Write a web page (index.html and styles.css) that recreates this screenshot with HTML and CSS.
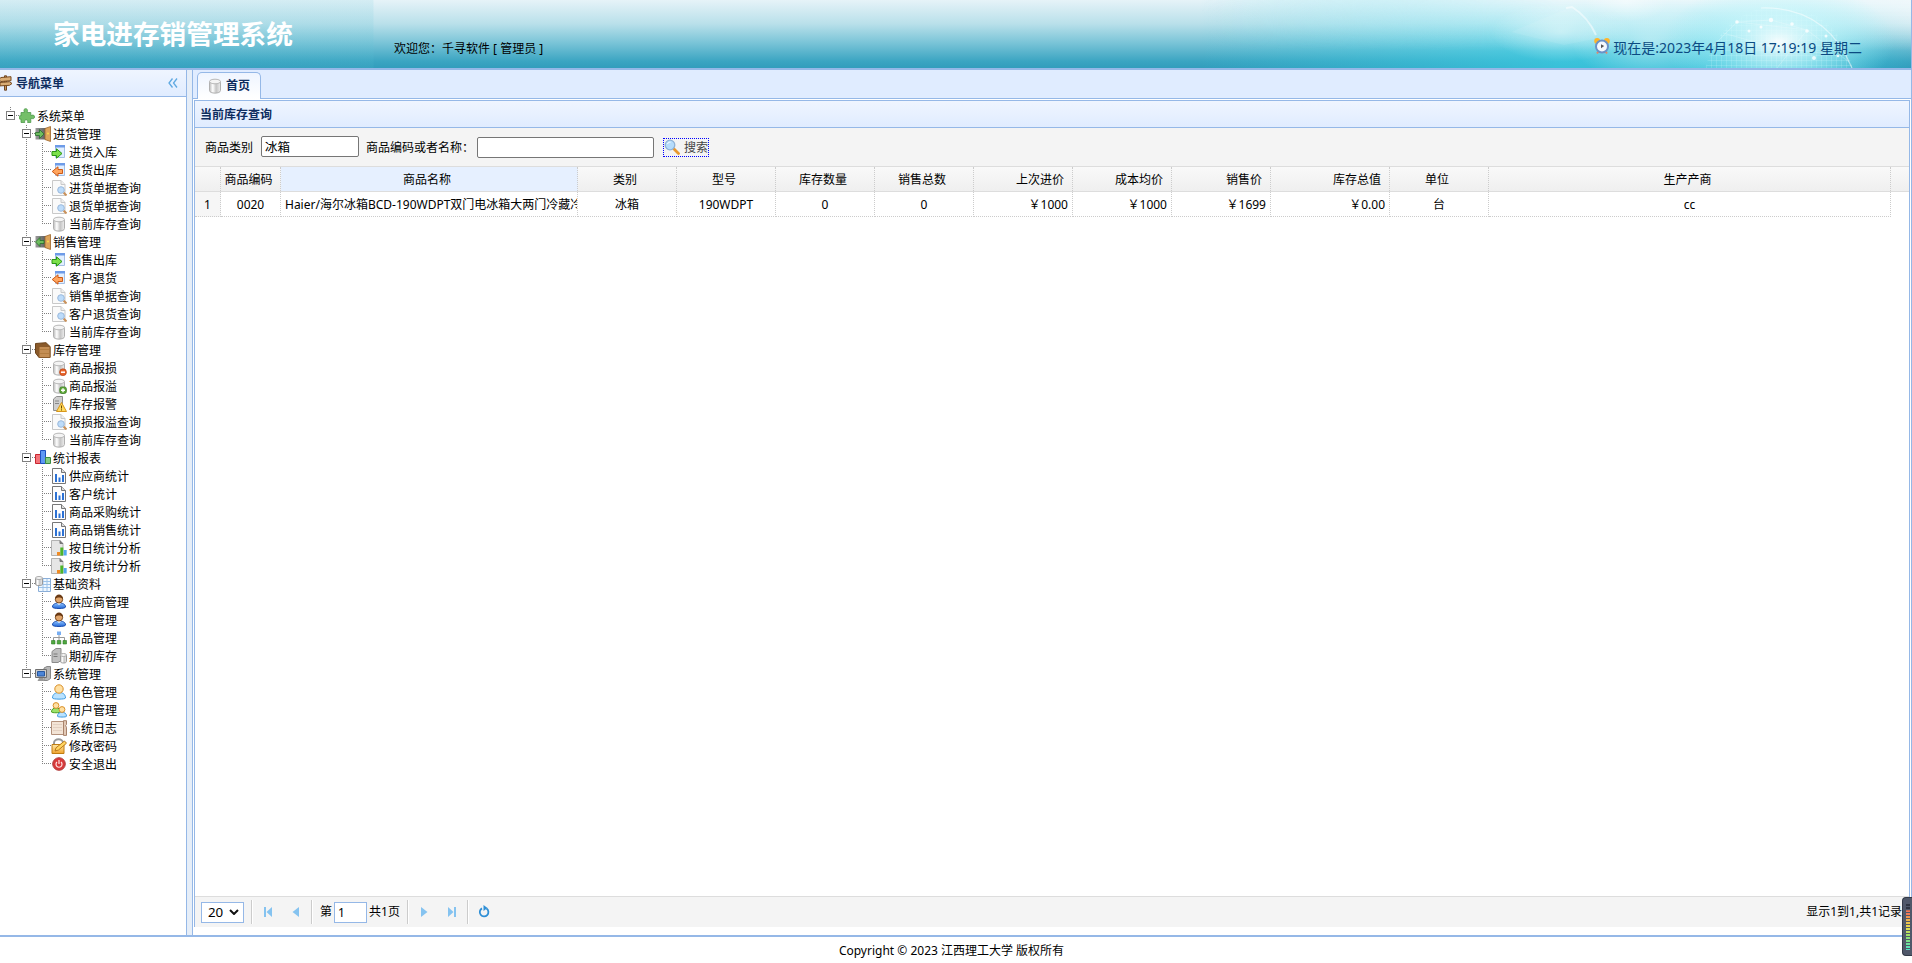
FILE: index.html
```html
<!DOCTYPE html>
<html lang="zh-CN">
<head>
  <meta charset="UTF-8" />
  <title>家电进存销管理系统</title>
  <link rel="stylesheet" href="styles.css">
</head>
<body>
  <!-- 图标 -->
  <svg class="sprite" width="0" height="0">
    <defs>
      <linearGradient id="g-metal" x1="0" x2="1" y1="0" y2="0"><stop offset="0" stop-color="#bbb"/><stop offset=".3" stop-color="#fff"/><stop offset=".6" stop-color="#c4c4c4"/><stop offset="1" stop-color="#eee"/></linearGradient>
      <linearGradient id="g-blue" x1="0" x2="0" y1="0" y2="1"><stop offset="0" stop-color="#8fc4ff"/><stop offset="1" stop-color="#2468d8"/></linearGradient>
      <linearGradient id="g-gold" x1="0" x2="0" y1="0" y2="1"><stop offset="0" stop-color="#ffe9a8"/><stop offset="1" stop-color="#f0a32c"/></linearGradient>
      <linearGradient id="g-door" x1="0" x2="1" y1="0" y2="0"><stop offset="0" stop-color="#9a9a9a"/><stop offset="1" stop-color="#5c5c5c"/></linearGradient>
      <radialGradient id="g-glow"><stop offset="0" stop-color="#fff" stop-opacity=".95"/><stop offset=".45" stop-color="#c9f8fc" stop-opacity=".55"/><stop offset="1" stop-color="#9ff0f8" stop-opacity="0"/></radialGradient>
      <radialGradient id="g-haze"><stop offset="0" stop-color="#fff" stop-opacity=".45"/><stop offset="1" stop-color="#fff" stop-opacity="0"/></radialGradient>
      <pattern id="p-grid" width="5" height="5" patternUnits="userSpaceOnUse"><path d="M0 .5H5M.5 0V5" stroke="#e8ffff" stroke-opacity=".3" stroke-width=".6"/></pattern>
    </defs>
    <symbol id="i-sign" viewBox="0 0 16 16"><path d="M6.500 .8h2v14.400h-2z" fill="#c99a62" stroke="#6d4523"/><path d="M3 2.500l10-.8v4l-10 .8-2.500-1.700zM2 7.500l9.500-.8 2.500 1.800-2.500 1.800-9.500.6z" fill="#d9ad76" stroke="#76491f"/></symbol>
    <symbol id="i-puzzle" viewBox="0 0 16 16"><path d="M2 4.500h3.400C4.300 1.500 5.300.7 6.700.7s2.400.9 1.400 3.800h3.700v3c3-1 3.700 0 3.700 1.500S14.400 11.200 11.800 10.200v4.300H8.600c.6-2.200-.2-2.600-1.400-2.600s-2 .5-1.400 2.600H2v-3.600c-1 .7-2 .2-2-1.500S1 7.200 2 8z" fill="#74bf68" stroke="#4e994b" stroke-width=".8"/></symbol>
    <symbol id="i-door-in" viewBox="0 0 16 16"><path d="M.5 2h10.500v11.500H.5z" fill="url(#g-door)"/><path d="M10 2.500l5.500-2v15l-5.500-2z" fill="#dda45c" stroke="#9d6428" stroke-width=".8"/><path d="M.5 6.500h4v-3L9 8l-4.500 4.500v-3h-4z" fill="#6fbd5f" stroke="#26702c" stroke-width=".8"/><circle cx="13" cy="7.500" r=".9" fill="#ffe34a"/></symbol>
    <symbol id="i-door-out" viewBox="0 0 16 16"><path d="M.5 2h10.500v11.500H.5z" fill="url(#g-door)"/><path d="M10 2.500l5.500-2v15l-5.500-2z" fill="#dda45c" stroke="#9d6428" stroke-width=".8"/><path d="M9 6.500H5v-3L.5 8 5 12.500v-3h4z" fill="#6fbd5f" stroke="#26702c" stroke-width=".8"/><circle cx="13" cy="7.500" r=".9" fill="#ffe34a"/></symbol>
    <symbol id="i-in" viewBox="0 0 16 16"><path d="M4.500 1.500h9v12h-9z" fill="#e2efff" stroke="#a5bfe3"/><path d="M4 1h10v2.500H4z" fill="#6d9be8"/><path d="M1 7.500h4.500V4.800l5.500 4.700-5.500 4.700v-2.700H1z" fill="#7be04a" stroke="#2b9514"/></symbol>
    <symbol id="i-out" viewBox="0 0 16 16"><path d="M4.500 1.500h9v12h-9z" fill="#e2efff" stroke="#a5bfe3"/><path d="M4 1h10v2.500H4z" fill="#6d9be8"/><path d="M11.500 7.500H7V4.800L1.200 9.500 7 14.200v-2.700h4.500z" fill="#ffa55e" stroke="#cf5a16"/></symbol>
    <symbol id="i-doc" viewBox="0 0 16 16"><path d="M1.500.5h8.500l4 4v11H1.500z" fill="#fafafa" stroke="#c9c9c9"/><path d="M10 .5v4h4" fill="#eee" stroke="#c9c9c9"/><path d="M12.500 12.500l3 3" stroke="#c9915a" stroke-width="2"/><circle cx="10" cy="10" r="3.300" fill="#bddcfa" stroke="#9bb9dc"/></symbol>
    <symbol id="i-db" viewBox="0 0 16 16"><path d="M2.500 3.500v9c0 3.500 11 3.500 11 0v-9" fill="url(#g-metal)" stroke="#b0b0b0"/><ellipse cx="8" cy="3.500" rx="5.500" ry="2.300" fill="#f4f4f4" stroke="#b8b8b8"/></symbol>
    <symbol id="i-box" viewBox="0 0 16 16"><path d="M.5 1.500L11 .7l4 3.800v11H4L.5 11z" fill="#8a5a2a" stroke="#6b431c"/><path d="M4 4.500h11v11H4z" fill="#c48e54" stroke="#8a5a2a"/><path d="M5 7.500h9M5 11.500h9" stroke="#b37d40"/></symbol>
    <symbol id="i-db-minus" viewBox="0 0 16 16"><use href="#i-db"/><circle cx="12" cy="12.200" r="3.400" fill="#e8642a" stroke="#b83f10" stroke-width=".7"/><path d="M10 12.200h4" stroke="#fff" stroke-width="1.500"/></symbol>
    <symbol id="i-db-plus" viewBox="0 0 16 16"><use href="#i-db"/><rect x="8.800" y="8.900" width="6.600" height="6.600" rx="2" fill="#5fa838" stroke="#2f7417" stroke-width=".7"/><path d="M10 12.200h4M12 10.200v4" stroke="#fff" stroke-width="1.400"/></symbol>
    <symbol id="i-warn" viewBox="0 0 16 16"><path d="M2.500 3l3-2.500h6v12l-2 2h-7z" fill="#cfcfcf" stroke="#8f8f8f"/><path d="M4 5h4M4 7.500h4" stroke="#888"/><path d="M10.500 6.500l5 9h-10z" fill="#ffd95c" stroke="#d8971d"/><path d="M10.500 9.500v3M10.500 13.300v1.200" stroke="#6a4a00"/></symbol>
    <symbol id="i-bars" viewBox="0 0 16 16"><path d="M.5 4.500h5v9h-5z" fill="#f3747a" stroke="#c9252e"/><path d="M5.500.5h5v13h-5z" fill="#5e98f4" stroke="#1c4fc0"/><path d="M10.500 7.500h5v6h-5z" fill="#83cc85" stroke="#3a8a42"/></symbol>
    <symbol id="i-report" viewBox="0 0 16 16"><path d="M1.500.5H10.500l4 4v11h-13z" fill="#fdfdfd" stroke="#777"/><path d="M10.500.5v4h4" fill="#ddd" stroke="#777"/><path d="M5 14V6M8.500 14V9.500M12 14V7" stroke="#2d72d4" stroke-width="2"/></symbol>
    <symbol id="i-daychart" viewBox="0 0 16 16"><path d="M.5.500h8.500l3 3v12H.5z" fill="#e6e6e6" stroke="#b3b3b3"/><path d="M9 .5v3h3" fill="#777" stroke="#777"/><path d="M6 12h3v3.500H6z" fill="#f08b24"/><path d="M9.300 7.500h3v8h-3z" fill="#4cb529"/><path d="M12.700 10h3v5.500h-3z" fill="#52a9ee"/></symbol>
    <symbol id="i-dbtable" viewBox="0 0 16 16"><path d="M3.500 2.500h12v13h-12z" fill="#f0f8ff" stroke="#8aaed8"/><path d="M4 5.500h11M4 8.500h11M4 11.500h11M8 3v12M12 3v12" stroke="#9cc2e8"/><path d="M.5 2v6c0 2.200 7 2.200 7 0V2" fill="url(#g-metal)" stroke="#999"/><ellipse cx="4" cy="2" rx="3.500" ry="1.500" fill="#f4f4f4" stroke="#aaa"/></symbol>
    <symbol id="i-man" viewBox="0 0 16 16"><path d="M1.500 13c0-3 3-4 6.500-4s6.500 1 6.500 4c0 2-13 2-13 0z" fill="url(#g-blue)" stroke="#1d4fae"/><path d="M6 9l2 2 2-2z" fill="#fff"/><circle cx="8" cy="5.300" r="3.700" fill="#e0a56c" stroke="#7b4a20"/><path d="M4 5c0-6 8-6 8 0-2-2-6-2-8 0z" fill="#6a3a14"/></symbol>
    <symbol id="i-org" viewBox="0 0 16 16"><path d="M2.500 11V7.500h11V11M8 5v6" fill="none" stroke="#999"/><path d="M6 1.500h4v3.500H6z" fill="#78aef2"/><path d="M.5 10.500h3.500v3.500H.5zM6.200 10.500h3.600v3.500H6.200zM12 10.500h3.500v3.500H12z" fill="#4fa83f" stroke="#2d7c25" stroke-width=".6"/></symbol>
    <symbol id="i-server" viewBox="0 0 16 16"><path d="M1 3.500L5 .5h5v12l-3 2H1z" fill="#bfbfbf" stroke="#8b8b8b"/><path d="M2.500 6h4M2.500 8.500h4" stroke="#7b7b7b"/><path d="M9.500 7v6.500c0 2 6 2 6 0V7" fill="url(#g-metal)" stroke="#9a9a9a"/><ellipse cx="12.500" cy="7" rx="3" ry="1.500" fill="#f4f4f4" stroke="#aaa"/></symbol>
    <symbol id="i-computer" viewBox="0 0 16 16"><path d="M9 2l3-1.500h3.500v12l-3 2H9z" fill="#b5b5b5" stroke="#888"/><path d="M.5 3.500h11v8H.5z" fill="#ccc" stroke="#6f6f6f"/><path d="M2.500 5.500h7v4.500h-7z" fill="#4c86d8" stroke="#2858a0"/><path d="M4 12h4l1.500 3h-7z" fill="#999"/></symbol>
    <symbol id="i-user" viewBox="0 0 16 16"><path d="M1.500 14c0-4 3-5.500 6.500-5.500s6.500 1.500 6.500 5.500c0 1.500-13 1.500-13 0z" fill="#b9e2ff" stroke="#3f9be0"/><circle cx="8" cy="5" r="4.200" fill="#ffe0a3" stroke="#d9902a"/></symbol>
    <symbol id="i-users" viewBox="0 0 16 16"><path d="M.5 10c0-3 2-4 4.500-4s4.500 1 4.500 4c0 1-9 1-9 0z" fill="#9be26a" stroke="#4d9f22"/><circle cx="5" cy="3.500" r="2.900" fill="#ffe0a3" stroke="#d9902a"/><path d="M6.500 14.300c0-3 2-4 4.500-4s4.500 1 4.500 4c0 1-9 1-9 0z" fill="#b9e2ff" stroke="#3f9be0"/><circle cx="11" cy="7.500" r="2.900" fill="#ffe0a3" stroke="#d9902a"/></symbol>
    <symbol id="i-log" viewBox="0 0 16 16"><path d="M.5 1.500h13v13H.5z" fill="#f3e4d6" stroke="#b3917c"/><path d="M2 4.500h9M2 7.500h9M2 10.500h9" stroke="#e3d0c1"/><path d="M12.500.7h3v4l-1 1 1 1.500v8.200h-3z" fill="#e2c9b6" stroke="#a8836c"/></symbol>
    <symbol id="i-lock" viewBox="0 0 16 16"><path d="M3 7V5c0-5 9-5 9 0v2" fill="none" stroke="#999" stroke-width="2"/><path d="M1 6.500h12v9H1z" fill="url(#g-gold)" stroke="#c07d12"/><path d="M4 13l1-3.200L13.500 3l2 2.200-8 6.800z" fill="#ffd561" stroke="#b9791a"/></symbol>
    <symbol id="i-power" viewBox="0 0 16 16"><circle cx="8" cy="8" r="6.300" fill="#d83a3a" stroke="#b04040"/><path d="M6 6a3 3 0 1 0 4 0M8 4v4" fill="none" stroke="#ffe4e4" stroke-width="1.200"/></symbol>
    <symbol id="i-search" viewBox="0 0 16 16"><path d="M9.500 9.500l5 5" stroke="#e8982e" stroke-width="2.800" stroke-linecap="round"/><circle cx="6" cy="6" r="4.800" fill="#b5dcfb" stroke="#8fb2d6" stroke-width="1.300"/><path d="M3.500 5c.5-1.500 2-2 3-1.800" fill="none" stroke="#fff"/></symbol>
    <symbol id="i-clock" viewBox="0 0 16 16"><path d="M3 15.500l2-3M13 15.500l-2-3" stroke="#e08a6a" stroke-width="2"/><circle cx="3.200" cy="3" r="3" fill="#ffb52a"/><circle cx="12.800" cy="3" r="3" fill="#ffb52a"/><circle cx="8" cy="8.500" r="6" fill="#f4f8fd" stroke="#6a92c8" stroke-width="2"/><path d="M7 6.200v4l3.200-2.200z" fill="#555"/></symbol>
  </svg>

  <div class="header">
    <svg class="banner" width="600" height="68" viewBox="0 0 600 68">
      <ellipse cx="200" cy="32" rx="70" ry="30" fill="url(#g-haze)"/>
      <ellipse cx="290" cy="42" rx="80" ry="40" fill="url(#g-haze)"/>
      <ellipse cx="265" cy="2" rx="42" ry="20" fill="url(#g-haze)"/>
      <path d="M150 32L210 7l26 24-3 8-30 6z" fill="#fff" fill-opacity=".08"/>
      <path d="M205 8l6-1q16 10 24 28" fill="none" stroke="#fff" stroke-opacity=".5" stroke-width="2"/>
      <circle cx="418" cy="80" r="74" fill="url(#p-grid)"/>
      <ellipse cx="418" cy="42" rx="115" ry="62" fill="url(#g-glow)"/>
      <path d="M400 8q65-2 91 60" fill="none" stroke="#fff" stroke-opacity=".5" stroke-width="1.200"/>
      <path d="M352 46l24-24 34-2 36 10 42 32M376 22l70 8-30 38M362 33l50 14 64 8" fill="none" stroke="#fff" stroke-opacity=".22"/>
      <g fill="#fff" fill-opacity=".8"><circle cx="376" cy="22" r="1.800"/><circle cx="410" cy="20" r="2.200"/><circle cx="431" cy="24" r="1.800"/><circle cx="446" cy="31" r="1.800"/><circle cx="400" cy="27" r="1.500"/><circle cx="388" cy="31" r="1.500"/><circle cx="465" cy="36" r="1.500"/><circle cx="453" cy="58" r="2"/><circle cx="477" cy="56" r="1.300"/></g>
    </svg>
    <div class="sys-title">家电进存销管理系统</div>
    <div class="welcome">欢迎您：千寻软件 [ 管理员 ]</div>
    <div class="clock"><svg class="icon"><use href="#i-clock"/></svg><span>现在是:2023年4月18日 17:19:19 星期二</span></div>
  </div>

  <div class="layout">
    <div class="west">
      <div class="west-title">
        <svg class="icon"><use href="#i-sign"/></svg><span>导航菜单</span>
        <svg class="collapse" width="10" height="10" viewBox="0 0 10 10"><path d="M4.500 .5L1 5l3.500 4.500M9 .5L5.500 5 9 9.500" fill="none" stroke="#5fa9e2" stroke-width="1.300"/></svg>
      </div>
      <ul class="tree">
        <li><div class="row"><i class="hit"></i><svg class="icon"><use href="#i-puzzle"/></svg><span>系统菜单</span></div>
          <ul>
            <li><div class="row"><i class="hit"></i><svg class="icon"><use href="#i-door-in"/></svg><span>进货管理</span></div>
              <ul>
                <li><div class="row"><svg class="icon"><use href="#i-in"/></svg><span>进货入库</span></div></li>
                <li><div class="row"><svg class="icon"><use href="#i-out"/></svg><span>退货出库</span></div></li>
                <li><div class="row"><svg class="icon"><use href="#i-doc"/></svg><span>进货单据查询</span></div></li>
                <li><div class="row"><svg class="icon"><use href="#i-doc"/></svg><span>退货单据查询</span></div></li>
                <li><div class="row"><svg class="icon"><use href="#i-db"/></svg><span>当前库存查询</span></div></li>
              </ul>
            </li>
            <li><div class="row"><i class="hit"></i><svg class="icon"><use href="#i-door-out"/></svg><span>销售管理</span></div>
              <ul>
                <li><div class="row"><svg class="icon"><use href="#i-in"/></svg><span>销售出库</span></div></li>
                <li><div class="row"><svg class="icon"><use href="#i-out"/></svg><span>客户退货</span></div></li>
                <li><div class="row"><svg class="icon"><use href="#i-doc"/></svg><span>销售单据查询</span></div></li>
                <li><div class="row"><svg class="icon"><use href="#i-doc"/></svg><span>客户退货查询</span></div></li>
                <li><div class="row"><svg class="icon"><use href="#i-db"/></svg><span>当前库存查询</span></div></li>
              </ul>
            </li>
            <li><div class="row"><i class="hit"></i><svg class="icon"><use href="#i-box"/></svg><span>库存管理</span></div>
              <ul>
                <li><div class="row"><svg class="icon"><use href="#i-db-minus"/></svg><span>商品报损</span></div></li>
                <li><div class="row"><svg class="icon"><use href="#i-db-plus"/></svg><span>商品报溢</span></div></li>
                <li><div class="row"><svg class="icon"><use href="#i-warn"/></svg><span>库存报警</span></div></li>
                <li><div class="row"><svg class="icon"><use href="#i-doc"/></svg><span>报损报溢查询</span></div></li>
                <li><div class="row"><svg class="icon"><use href="#i-db"/></svg><span>当前库存查询</span></div></li>
              </ul>
            </li>
            <li><div class="row"><i class="hit"></i><svg class="icon"><use href="#i-bars"/></svg><span>统计报表</span></div>
              <ul>
                <li><div class="row"><svg class="icon"><use href="#i-report"/></svg><span>供应商统计</span></div></li>
                <li><div class="row"><svg class="icon"><use href="#i-report"/></svg><span>客户统计</span></div></li>
                <li><div class="row"><svg class="icon"><use href="#i-report"/></svg><span>商品采购统计</span></div></li>
                <li><div class="row"><svg class="icon"><use href="#i-report"/></svg><span>商品销售统计</span></div></li>
                <li><div class="row"><svg class="icon"><use href="#i-daychart"/></svg><span>按日统计分析</span></div></li>
                <li><div class="row"><svg class="icon"><use href="#i-daychart"/></svg><span>按月统计分析</span></div></li>
              </ul>
            </li>
            <li><div class="row"><i class="hit"></i><svg class="icon"><use href="#i-dbtable"/></svg><span>基础资料</span></div>
              <ul>
                <li><div class="row"><svg class="icon"><use href="#i-man"/></svg><span>供应商管理</span></div></li>
                <li><div class="row"><svg class="icon"><use href="#i-man"/></svg><span>客户管理</span></div></li>
                <li><div class="row"><svg class="icon"><use href="#i-org"/></svg><span>商品管理</span></div></li>
                <li><div class="row"><svg class="icon"><use href="#i-server"/></svg><span>期初库存</span></div></li>
              </ul>
            </li>
            <li><div class="row"><i class="hit"></i><svg class="icon"><use href="#i-computer"/></svg><span>系统管理</span></div>
              <ul>
                <li><div class="row"><svg class="icon"><use href="#i-user"/></svg><span>角色管理</span></div></li>
                <li><div class="row"><svg class="icon"><use href="#i-users"/></svg><span>用户管理</span></div></li>
                <li><div class="row"><svg class="icon"><use href="#i-log"/></svg><span>系统日志</span></div></li>
                <li><div class="row"><svg class="icon"><use href="#i-lock"/></svg><span>修改密码</span></div></li>
                <li><div class="row"><svg class="icon"><use href="#i-power"/></svg><span>安全退出</span></div></li>
              </ul>
            </li>
          </ul>
        </li>
      </ul>
    </div>

    <div class="center">
      <div class="tabs">
        <div class="tab"><svg class="icon"><use href="#i-db"/></svg><span>首页</span></div>
      </div>
      <div class="panel">
        <div class="panel-title">当前库存查询</div>
        <div class="toolbar">
          <label>商品类别</label>
          <input class="type-input" type="text" value="冰箱">
          <label>商品编码或者名称：</label>
          <input class="name-input" type="text">
          <a class="search-btn"><svg class="icon"><use href="#i-search"/></svg><span>搜索</span></a>
        </div>
        <div class="grid grid-head">
          <div></div><div>商品编码</div><div class="hover">商品名称</div><div>类别</div><div>型号</div><div>库存数量</div><div>销售总数</div>
          <div class="num">上次进价</div><div class="num">成本均价</div><div class="num">销售价</div><div class="num">库存总值</div><div>单位</div><div>生产产商</div>
        </div>
        <div class="grid grid-row">
          <div class="rownum">1</div><div>0020</div><div class="name">Haier/海尔冰箱BCD-190WDPT双门电冰箱大两门冷藏冷</div><div>冰箱</div><div>190WDPT</div><div>0</div><div>0</div>
          <div class="num">￥1000</div><div class="num">￥1000</div><div class="num">￥1699</div><div class="num">￥0.00</div><div>台</div><div>cc</div>
        </div>
        <div class="grid-space"></div>
        <div class="pager">
          <div class="page-size">20<svg width="10" height="6" viewBox="0 0 10 6"><path d="M1 1l4 4 4-4" fill="none" stroke="#111" stroke-width="2"/></svg></div>
          <i class="sep"></i>
          <svg class="pg" viewBox="0 0 16 16"><path d="M4 3h2v10H4zM12 3v10L6.500 8z" fill="#85c3f0"/></svg>
          <svg class="pg" viewBox="0 0 16 16"><path d="M11 3v10L4.500 8z" fill="#85c3f0"/></svg>
          <i class="sep"></i>
          <span>第</span><input class="page-num" type="text" value="1"><span>共1页</span>
          <i class="sep"></i>
          <svg class="pg" viewBox="0 0 16 16"><path d="M5 3v10l6.500-5z" fill="#85c3f0"/></svg>
          <svg class="pg" viewBox="0 0 16 16"><path d="M4 3v10l5.500-5zM10 3h2v10h-2z" fill="#85c3f0"/></svg>
          <i class="sep"></i>
          <svg class="pg" viewBox="0 0 16 16"><path d="M10.500 4.600A4.300 4.300 0 1 1 6 4.400" fill="none" stroke="#2f8fd6" stroke-width="1.800"/><path d="M7.500 1v6L11.500 4z" fill="#2f8fd6"/></svg>
          <span class="page-info">显示1到1,共1记录</span>
        </div>
      </div>
    </div>
  </div>

  <div class="footer">Copyright © 2023 江西理工大学 版权所有</div>

  <div class="meter"><i class="bars"></i></div>
</body>
</html>
```

FILE: styles.css
```css
* {
  box-sizing: border-box;
}

body {
  margin: 0;
  height: 963px;
  display: flex;
  flex-direction: column;
  overflow: hidden;
  background: #fff;
  color: #000;
  font-family: "Noto Sans", "Noto Sans CJK SC", sans-serif;
  font-size: 12px;
  line-height: 18px;
}

input {
  font-family: inherit;
  font-size: 12px;
  padding: 0 3px;
  outline: none;
}

.sprite {
  position: absolute;
}

.icon {
  width: 16px;
  height: 16px;
  flex: none;
}

/* 顶部 */
.header {
  position: relative;
  height: 70px;
  flex: none;
  display: flex;
  border-bottom: 2px solid #95b8e7;
  border-right: 1px solid #95b8e7;
  background:
    linear-gradient(90deg, rgba(60, 215, 235, 0) 1200px, rgba(60, 215, 235, .6) 1560px, rgba(60, 215, 235, .6) 1800px, rgba(60, 215, 235, 0) 1911px),
    linear-gradient(90deg, rgba(90, 195, 215, .12) 373px, transparent 374px),
    linear-gradient(#e6f3f8 0%, #b9e0ea 35%, #7cc5d8 62%, #3ba5c2 90%, #329dbc 100%);
}

.header::before {
  content: "";
  position: absolute;
  inset: 0;
  background: linear-gradient(rgba(240, 248, 251, .95), rgba(240, 248, 251, 0) 75%);
  mask-image: linear-gradient(90deg, transparent 1200px, #000 1560px);
}

.banner {
  position: absolute;
  right: -50px;
  top: 0;
}

.sys-title {
  width: 394px;
  padding: 15px 0 0 53px;
  color: #fff;
  font-size: 26.67px;
  font-weight: bold;
  line-height: 38px;
}

.welcome {
  padding-top: 40px;
}

.clock {
  position: relative;
  display: flex;
  gap: 3px;
  margin-left: auto;
  margin-right: 49px;
  padding-top: 38px;
  color: #0b4a82;
  font-size: 14px;
  line-height: 20px;
}

/* 主体 */
.layout {
  flex: 1;
  display: flex;
  min-height: 0;
  background: #e6eef8;
  border-bottom: 2px solid #95b8e7;
}

.west {
  width: 187px;
  margin-right: 5px;
  border-right: 1px solid #95b8e7;
  background: #fff;
}

.west-title {
  height: 27px;
  display: flex;
  align-items: center;
  padding-right: 8px;
  border-bottom: 1px solid #95b8e7;
  background: linear-gradient(#eff5ff, #e0ecff);
  color: #0e2d5f;
  font-weight: bold;
}

.west-title span {
  padding-top: 1px;
}

.west-title .icon {
  margin-left: -2px;
  margin-right: 2px;
}

.collapse {
  margin-left: auto;
}

/* 树 */
.tree,
.tree ul {
  list-style: none;
  margin: 0;
  padding: 0;
}

.tree {
  padding: 10px 0 0 3px;
}

.tree ul {
  padding-left: 16px;
}

.tree li {
  background:
    repeating-linear-gradient(#808080 0 1px, transparent 1px 2px) 7px 0 / 1px 100% no-repeat,
    repeating-linear-gradient(90deg, #808080 0 1px, transparent 1px 2px) 7px 8px / 9px 1px no-repeat;
}

.tree li:last-child {
  background-size: 1px 9px, 9px 1px;
}

.tree ul ul .row {
  padding-left: 16px;
}

.row {
  display: flex;
  align-items: center;
  height: 18px;
}

.row span {
  padding-top: 2px;
}

.row .icon {
  margin-right: 2px;
}

.hit {
  width: 9px;
  height: 9px;
  margin: -1px 4px 0 3px;
  border: 1px solid #808080;
  background: linear-gradient(#000, #000) center / 5px 1px no-repeat #fff;
}

/* 内容区 */
.center {
  flex: 1;
  min-width: 0;
  display: flex;
  flex-direction: column;
  border-left: 1px solid #95b8e7;
  border-right: 1px solid #95b8e7;
  background: #fff;
}

.tabs {
  height: 29px;
  padding: 2px 0 0 4px;
  border-bottom: 1px solid #95b8e7;
  background: #e0ecff;
}

.tab {
  width: 64px;
  height: 27px;
  display: flex;
  align-items: center;
  gap: 3px;
  padding-left: 9px;
  border: 1px solid #95b8e7;
  border-bottom: 0;
  border-radius: 5px 5px 0 0;
  background: linear-gradient(#eff5ff, #fff);
  color: #0e2d5f;
  font-weight: bold;
}

.panel {
  flex: 1;
  display: flex;
  flex-direction: column;
  margin: 1px 1px 8px;
  border: 1px solid #95b8e7;
  border-bottom: 0;
}

.panel-title {
  height: 27px;
  padding: 5px 5px 0;
  border-bottom: 1px solid #95b8e7;
  background: linear-gradient(#eff5ff, #e0ecff);
  color: #0e2d5f;
  font-weight: bold;
}

.toolbar {
  height: 39px;
  display: flex;
  align-items: center;
  padding-left: 10px;
  border-bottom: 1px solid #ddd;
  background: #f4f4f4;
}

.toolbar label {
  padding-top: 1px;
}

.toolbar input {
  height: 21px;
  border: 1px solid #767676;
  border-radius: 2px;
}

.toolbar .type-input {
  width: 98px;
  margin: -2px 7px 0 8px;
  font-size: 12.5px;
}

.toolbar .name-input {
  width: 177px;
  margin: 0 9px 0 3px;
}

.search-btn {
  display: flex;
  align-items: center;
  gap: 4px;
  height: 19px;
  border: 1px dotted #00f;
  color: #444;
}

.search-btn span {
  padding-top: 1px;
}

.grid {
  display: grid;
  grid-template-columns: 26px 60px 297px 99px 99px 99px 99px 99px 99px 99px 119px 99px 402px;
  text-align: center;
}

.grid > div {
  height: 25px;
  padding: 4px;
  border-right: 1px dotted #ccc;
  overflow: hidden;
  white-space: nowrap;
}

.grid-head {
  border-bottom: 1px solid #ddd;
  background: linear-gradient(#f9f9f9, #efefef);
}

.grid-head > div {
  height: 24px;
  padding: 4px 7px 2px 3px;
}

.grid-head > .hover {
  background: #e6f0ff;
}

.grid-row > div {
  border-bottom: 1px dotted #ccc;
}

.grid-row > .rownum {
  background: #f6f6f6;
}

.grid > .num {
  text-align: right;
}

.grid-head > .num {
  padding-right: 8px;
}

.grid-row > .name {
  text-align: left;
}

.grid-space {
  flex: 1;
}

/* 分页 */
.pager {
  height: 31px;
  display: flex;
  align-items: center;
  padding-left: 6px;
  border-top: 1px solid #ddd;
  background: #f4f4f4;
}

.page-size {
  width: 43px;
  height: 21px;
  display: flex;
  align-items: center;
  justify-content: space-between;
  padding: 0 4px 0 6px;
  border: 1px solid #95b8e7;
  background: #fff;
  font-size: 13.33px;
}

.sep {
  width: 2px;
  height: 24px;
  margin: 0 7px;
  border-left: 1px solid #ccc;
  border-right: 1px solid #fff;
}

.pg {
  width: 16px;
  height: 16px;
  margin-right: 12px;
}

.pg + .sep {
  margin-left: -5px;
}

.page-num {
  width: 33px;
  height: 21px;
  margin: 0 2px;
  border: 1px solid #95b8e7;
}

.page-info {
  margin-left: auto;
  margin-right: 7px;
}

.footer {
  height: 26px;
  padding: 5px 9px 0 0;
  text-align: center;
}

/* 右下角音量条 */
.meter {
  position: absolute;
  right: 0;
  top: 897px;
  width: 10px;
  height: 59px;
  padding: 6px 0 0 3px;
  border: 1px solid #333a48;
  border-right: 0;
  border-radius: 4px 0 0 4px;
  background: #50586a;
}

.bars {
  display: block;
  width: 4px;
  height: 46px;
  background:
    repeating-linear-gradient(transparent 0 2px, #50586a 2px 3px),
    linear-gradient(#2e3442 0 11%, #f0785a 15% 22%, #f0b64a 36%, #e6dc50 52%, #8fe070 72%, #4fe0c8);
}
```
